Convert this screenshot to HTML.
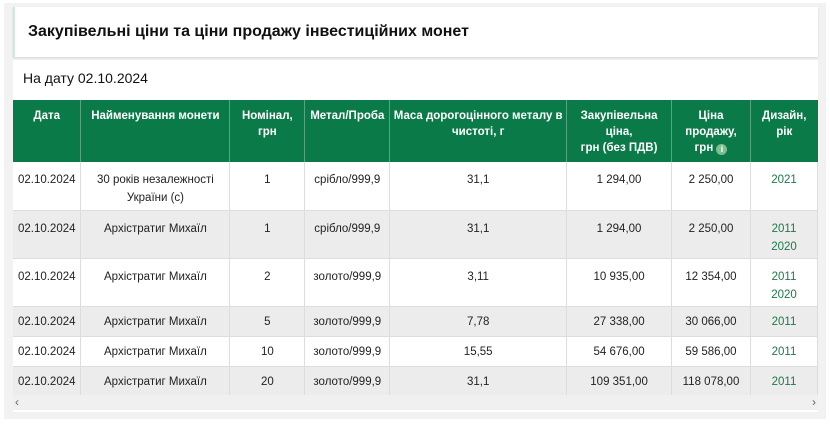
<!DOCTYPE html>
<html><head><meta charset="utf-8"><style>
*{margin:0;padding:0;box-sizing:border-box}
body{width:830px;height:429px;background:#fff;font-family:"Liberation Sans",sans-serif;position:relative;overflow:hidden}
.bg{position:absolute;left:4px;top:3px;width:822px;height:416px;background:#f2f2f2}
.title{position:absolute;left:13px;top:7px;width:805px;height:50px;background:#fff;border-left:2px solid #cfe8e0;box-shadow:0 1px 2px rgba(0,0,0,.12);font-size:16px;font-weight:bold;line-height:50px;padding-left:13px;color:#111}
.panel{position:absolute;left:13px;top:60px;width:805px;height:352px;background:#fff}
.date{position:absolute;left:23px;top:70px;font-size:14px;color:#111}
table{position:absolute;left:13px;top:100px;width:805px;border-collapse:collapse;font-size:11.5px;color:#222}
th{background:#0a7a48;color:#fff;font-weight:bold;vertical-align:top;padding:8px 1px 0;height:62px;line-height:16px;border-right:1px solid #5aa581;text-align:center}
td{text-align:center;vertical-align:top;padding:9px 4px 0;border-right:1px solid #ddd;border-bottom:1px solid #ddd;line-height:18px}
tr.t td{height:48px}tr.s td{height:30px;padding-top:6px}
tr.g td{background:#ececec}
td.y{color:#1c7a4a}
.i{display:inline-block;width:11px;height:11px;border-radius:50%;background:#7dbf8f;color:#fff;font-size:9px;line-height:11px;text-align:center;vertical-align:-1px}
.sb{position:absolute;left:13px;top:395px;width:805px;height:15px;background:#f0f0f0;font-size:12px;color:#666}
</style></head><body>
<div class="bg"></div>
<div class="title">Закупівельні ціни та ціни продажу інвестиційних монет</div>
<div class="panel"></div>
<div class="date">На дату 02.10.2024</div>
<table>
<colgroup><col style="width:68px"><col style="width:149px"><col style="width:75px"><col style="width:85px"><col style="width:177px"><col style="width:105px"><col style="width:79px"><col style="width:67px"></colgroup>
<tr><th>Дата</th><th>Найменування монети</th><th>Номінал,<br>грн</th><th>Метал/Проба</th><th>Маса дорогоцінного металу в<br>чистоті, г</th><th>Закупівельна<br>ціна,<br>грн (без ПДВ)</th><th>Ціна<br>продажу,<br>грн <span class="i">i</span></th><th style="border-right:0">Дизайн,<br>рік</th></tr>
<tr class="t"><td>02.10.2024</td><td>30 років незалежності<br>України (с)</td><td>1</td><td>срібло/999,9</td><td>31,1</td><td>1 294,00</td><td>2 250,00</td><td class="y">2021</td></tr>
<tr class="t g"><td>02.10.2024</td><td>Архістратиг Михаїл</td><td>1</td><td>срібло/999,9</td><td>31,1</td><td>1 294,00</td><td>2 250,00</td><td class="y">2011<br>2020</td></tr>
<tr class="t"><td>02.10.2024</td><td>Архістратиг Михаїл</td><td>2</td><td>золото/999,9</td><td>3,11</td><td>10 935,00</td><td>12 354,00</td><td class="y">2011<br>2020</td></tr>
<tr class="s g"><td>02.10.2024</td><td>Архістратиг Михаїл</td><td>5</td><td>золото/999,9</td><td>7,78</td><td>27 338,00</td><td>30 066,00</td><td class="y">2011</td></tr>
<tr class="s"><td>02.10.2024</td><td>Архістратиг Михаїл</td><td>10</td><td>золото/999,9</td><td>15,55</td><td>54 676,00</td><td>59 586,00</td><td class="y">2011</td></tr>
<tr class="s g"><td>02.10.2024</td><td>Архістратиг Михаїл</td><td>20</td><td>золото/999,9</td><td>31,1</td><td>109 351,00</td><td>118 078,00</td><td class="y">2011</td></tr>
</table>
<div class="sb"><span style="position:absolute;left:2px;top:0">‹</span><span style="position:absolute;right:2px;top:0">›</span></div>
</body></html>
